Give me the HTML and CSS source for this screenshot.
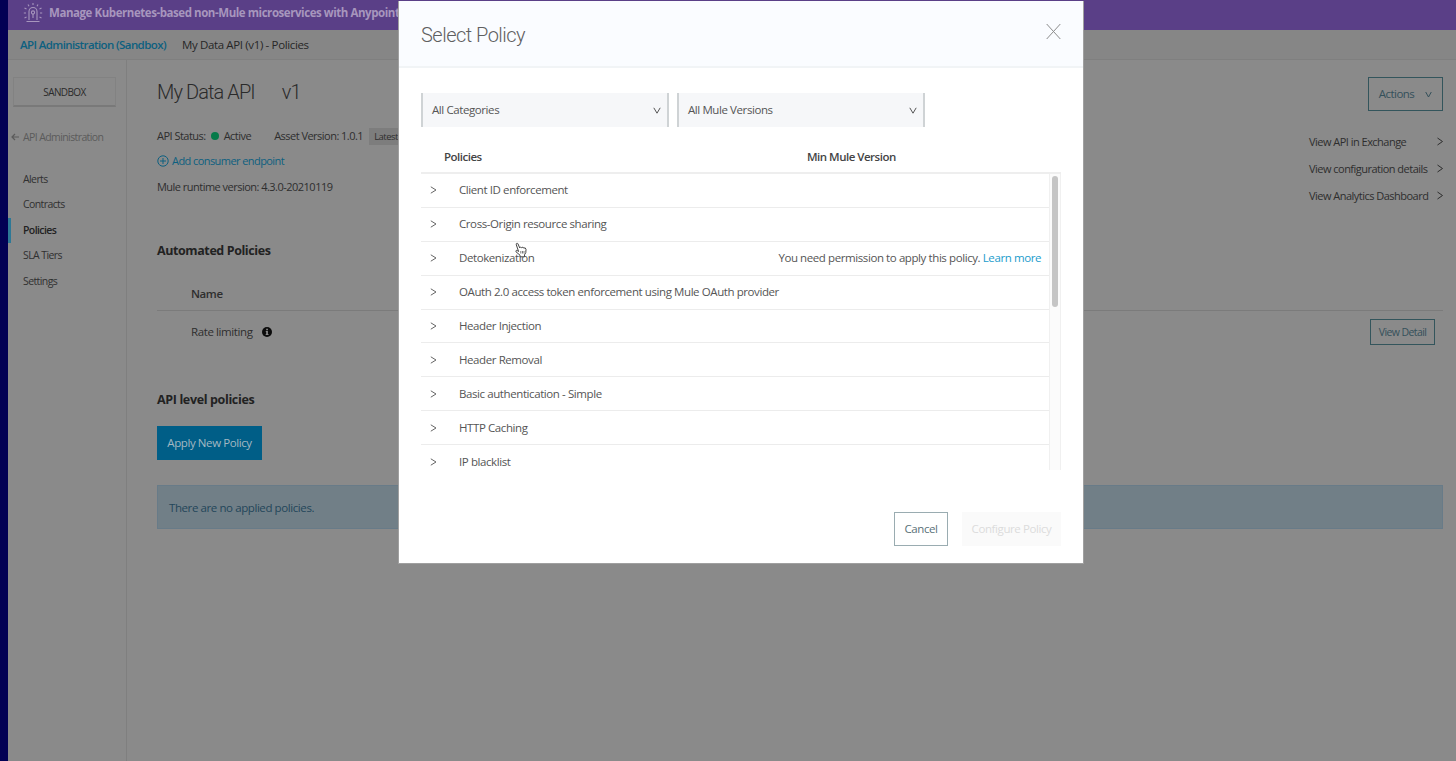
FILE: index.html
```
<!DOCTYPE html>
<html lang="en">
<head>
  <meta charset="UTF-8" />
  <meta name="viewport" content="width=device-width, initial-scale=1.0" />
  <title>API Manager</title>
  <link rel="stylesheet" href="styles.css">
</head>
<body>
  <div class="app">
    <header class="banner">
      <svg class="banner-icon" width="20" height="22" viewBox="0 0 20 22" fill="none" stroke="currentColor" stroke-width="1.1">
        <path d="M6 18V9.5a4 4 0 0 1 8 0V18M3.5 19.5h13M10 12v4"/>
        <circle cx="10" cy="10.5" r="1.6"/>
        <path d="M10 1v2M5 2.5l1 1.7M15 2.5l-1 1.7M1.5 6l2 1M18.5 6l-2 1M.8 11h2.2M17 11h2.2M1.5 16l2-1M18.5 16l-2-1"/>
      </svg>
      <span>Manage Kubernetes-based non-Mule microservices with Anypoint</span>
    </header>
    <nav class="breadcrumb">
      <a class="crumb-link">API Administration (Sandbox)</a>
      <span class="crumb-current">My Data API (v1) - Policies</span>
    </nav>
    <div class="content">
      <aside class="sidebar">
        <button class="env">SANDBOX</button>
        <a class="back">
          <svg width="8" height="8" viewBox="0 0 8 8" fill="none" stroke="currentColor" stroke-width="1.2"><path d="M8 4H1M4 1L1 4l3 3"/></svg>
          <span>API Administration</span>
        </a>
        <ul class="menu">
          <li>Alerts</li>
          <li>Contracts</li>
          <li class="active">Policies</li>
          <li>SLA Tiers</li>
          <li>Settings</li>
        </ul>
      </aside>
      <main class="main">
        <div class="top">
          <div class="info">
            <h1><span>My Data API</span><span>v1</span></h1>
            <div class="status">
              <span>API Status:</span>
              <i class="dot"></i>
              <span>Active</span>
              <span class="asset">Asset Version: 1.0.1</span>
              <span class="badge">Latest</span>
            </div>
            <a class="endpoint">
              <svg width="12" height="12" viewBox="0 0 12 12" fill="none" stroke="currentColor"><circle cx="6" cy="6" r="5.2"/><path d="M6 3v6M3 6h6"/></svg>
              <span>Add consumer endpoint</span>
            </a>
            <p class="runtime">Mule runtime version: 4.3.0-20210119</p>
          </div>
          <div class="side-actions">
            <button class="actions">
              <span>Actions</span>
              <svg width="7" height="7" viewBox="0 0 7 7" fill="none" stroke="currentColor"><path d="M.7 1l2.8 5 2.8-5"/></svg>
            </button>
            <ul class="views">
              <li><span>View API in Exchange</span><svg width="6" height="9" viewBox="0 0 6 9" fill="none" stroke="currentColor"><path d="M.5 1l5 3.5-5 3.5"/></svg></li>
              <li><span>View configuration details</span><svg width="6" height="9" viewBox="0 0 6 9" fill="none" stroke="currentColor"><path d="M.5 1l5 3.5-5 3.5"/></svg></li>
              <li><span>View Analytics Dashboard</span><svg width="6" height="9" viewBox="0 0 6 9" fill="none" stroke="currentColor"><path d="M.5 1l5 3.5-5 3.5"/></svg></li>
            </ul>
          </div>
        </div>
        <h2>Automated Policies</h2>
        <div class="table-head">Name</div>
        <div class="table-row">
          <span>Rate limiting</span>
          <svg class="info-icon" width="10" height="10" viewBox="0 0 10 10"><circle cx="5" cy="5" r="5" fill="#0c0c0c"/><path d="M4.2 1.7h1.7v1.5H4.2zM3.8 4.1h2.1v3h.6v1H3.7v-1h.5V5.1h-.4z" fill="#8a8a8a"/></svg>
          <button class="detail">View Detail</button>
        </div>
        <h2 class="level">API level policies</h2>
        <button class="apply">Apply New Policy</button>
        <div class="notice">There are no applied policies.</div>
      </main>
    </div>
  </div>

  <div class="modal">
    <div class="modal-header">
      <h3>Select Policy</h3>
      <svg class="close" width="15" height="17" viewBox="0 0 15 17" fill="none" stroke="currentColor"><path d="M.7 1l13.6 15M14.3 1L.7 16"/></svg>
    </div>
    <div class="filters">
      <div class="select"><span>All Categories</span><svg width="8" height="7" viewBox="0 0 8 7" fill="none" stroke="currentColor"><path d="M.8.8L4 6.2 7.2.8"/></svg></div>
      <div class="select"><span>All Mule Versions</span><svg width="8" height="7" viewBox="0 0 8 7" fill="none" stroke="currentColor"><path d="M.8.8L4 6.2 7.2.8"/></svg></div>
    </div>
    <div class="list-head"><span class="col-policy">Policies</span><span>Min Mule Version</span></div>
    <div class="list">
      <ul class="rows">
        <li><svg class="arrow" width="7" height="8" viewBox="0 0 7 8" fill="none" stroke="currentColor"><path d="M.8.8L6 4 .8 7.2"/></svg><span>Client ID enforcement</span></li>
        <li><svg class="arrow" width="7" height="8" viewBox="0 0 7 8" fill="none" stroke="currentColor"><path d="M.8.8L6 4 .8 7.2"/></svg><span>Cross-Origin resource sharing</span></li>
        <li><svg class="arrow" width="7" height="8" viewBox="0 0 7 8" fill="none" stroke="currentColor"><path d="M.8.8L6 4 .8 7.2"/></svg><span>Detokenization</span><span class="permission">You need permission to apply this policy. <a>Learn more</a></span></li>
        <li><svg class="arrow" width="7" height="8" viewBox="0 0 7 8" fill="none" stroke="currentColor"><path d="M.8.8L6 4 .8 7.2"/></svg><span>OAuth 2.0 access token enforcement using Mule OAuth provider</span></li>
        <li><svg class="arrow" width="7" height="8" viewBox="0 0 7 8" fill="none" stroke="currentColor"><path d="M.8.8L6 4 .8 7.2"/></svg><span>Header Injection</span></li>
        <li><svg class="arrow" width="7" height="8" viewBox="0 0 7 8" fill="none" stroke="currentColor"><path d="M.8.8L6 4 .8 7.2"/></svg><span>Header Removal</span></li>
        <li><svg class="arrow" width="7" height="8" viewBox="0 0 7 8" fill="none" stroke="currentColor"><path d="M.8.8L6 4 .8 7.2"/></svg><span>Basic authentication - Simple</span></li>
        <li><svg class="arrow" width="7" height="8" viewBox="0 0 7 8" fill="none" stroke="currentColor"><path d="M.8.8L6 4 .8 7.2"/></svg><span>HTTP Caching</span></li>
        <li><svg class="arrow" width="7" height="8" viewBox="0 0 7 8" fill="none" stroke="currentColor"><path d="M.8.8L6 4 .8 7.2"/></svg><span>IP blacklist</span></li>
      </ul>
      <div class="scrollbar"><div class="thumb"></div></div>
    </div>
    <div class="modal-footer">
      <button class="cancel">Cancel</button>
      <button class="configure" disabled>Configure Policy</button>
    </div>
  </div>

  <svg class="cursor" width="12" height="16" viewBox="0 0 12 16" fill="#fff" stroke="#444" stroke-linejoin="round">
    <path d="M3.6 9.5L1.3 2.8C.8 1.2 2.4.6 3 1.9l1.7 4 .8-.9 1.2.7 1.2-.5 1 .9 1.3-.2.8 1.4-.2 3.3-1.3 2.2v2H5v-1.6L1 9.8C.3 8.8 1.4 8 2.3 8.6z"/>
    <path d="M5.8 9v2.5M7.5 9v2.5M9 9v2.5" stroke-width=".7"/>
  </svg>
</body>
</html>
```
FILE: styles.css
```
* {
  box-sizing: border-box;
}
body {
  margin: 0;
  height: 761px;
  overflow: hidden;
  background: #020054;
  font-family: "Open Sans", sans-serif;
  font-size: 11.5px;
  letter-spacing: -0.41px;
  line-height: 16px;
  color: #2e2e2e;
}
h1, h2, h3, p, ul {
  margin: 0;
  padding: 0;
  font-weight: normal;
}
ul {
  list-style: none;
}
button {
  font: inherit;
  letter-spacing: inherit;
  padding: 0;
  background: none;
  border-radius: 0;
}
span {
  white-space: nowrap;
}
svg {
  flex-shrink: 0;
}
.app {
  margin-left: 8px;
  height: 761px;
  background: #8a8a8a;
  display: flex;
  flex-direction: column;
}
.banner {
  height: 30px;
  background: #5a3f87;
  color: #a796bd;
  font-weight: bold;
  letter-spacing: -0.44px;
  display: flex;
  align-items: center;
  padding: 0 0 5px 15px;
  gap: 6px;
}
.breadcrumb {
  height: 30px;
  background: #868686;
  border-bottom: 1px solid #7f7f7f;
  display: flex;
  align-items: center;
  padding-left: 12px;
  gap: 16px;
}
.crumb-link {
  color: #0d6080;
  font-weight: 600;
  letter-spacing: -0.6px;
}
.crumb-current {
  color: #262626;
  letter-spacing: -0.36px;
}
.content {
  flex: 1;
  display: flex;
}
.sidebar {
  width: 119px;
  border-right: 1px solid #7f7f7f;
  padding-top: 17px;
}
.env {
  display: block;
  width: 103px;
  height: 30px;
  margin-left: 5px;
  border: 1px solid #828282;
  border-bottom: 2px solid #797979;
  font-size: 10px;
  letter-spacing: -0.6px;
  color: #2b2b2b;
}
.back {
  display: flex;
  align-items: center;
  gap: 4px;
  margin: 22px 0 0 3px;
  color: #5b5b5b;
  font-size: 10.5px;
  letter-spacing: -0.6px;
}
.menu {
  margin-top: 22px;
  font-size: 10.5px;
  letter-spacing: -0.6px;
}
.menu li {
  height: 25.4px;
  line-height: 25px;
  padding-left: 15px;
  color: #303030;
}
.menu .active {
  border-left: 3px solid #2d7896;
  padding-left: 12px;
  line-height: 24px;
  font-weight: 600;
  color: #222;
}
.main {
  flex: 1;
  padding: 17px 13px 0 30px;
}
.top {
  display: flex;
  justify-content: space-between;
  height: 164px;
  font-size: 11px;
  letter-spacing: -0.52px;
}
h1 {
  font-family: Roboto, sans-serif;
  font-weight: 300;
  font-size: 20px;
  letter-spacing: -0.9px;
  line-height: 31px;
  color: #2a2a2a;
  display: flex;
  gap: 27px;
}
.status {
  display: flex;
  align-items: center;
  margin-top: 19px;
  height: 18px;
}
.dot {
  width: 8px;
  height: 8px;
  border-radius: 50%;
  background: #067a49;
  margin: 0 5px;
}
.asset {
  margin-left: 23px;
}
.badge {
  margin-left: 6px;
  padding: 0 5px;
  background: #7d7d7d;
  font-size: 9.5px;
  line-height: 17px;
}
.endpoint {
  display: flex;
  align-items: center;
  gap: 3px;
  margin-top: 8px;
  color: #0d6080;
  font-weight: 500;
  letter-spacing: -0.57px;
}
.runtime {
  margin-top: 10px;
  white-space: nowrap;
}
.actions {
  width: 75px;
  height: 34px;
  border: 1px solid #33555c;
  color: #34505a;
  font-size: 11.5px;
  display: flex;
  align-items: center;
  justify-content: center;
  gap: 11px;
  margin-left: auto;
}
.views {
  margin-top: 17px;
  width: 134px;
}
.views li {
  display: flex;
  align-items: center;
  justify-content: space-between;
  height: 27px;
}
h2 {
  font-size: 12.5px;
  font-weight: bold;
  line-height: 20px;
  color: #222;
}
.table-head {
  margin-top: 23px;
  height: 27px;
  padding-left: 34px;
  font-weight: 600;
  line-height: 20px;
  border-bottom: 1px solid #7b7b7b;
}
.table-row {
  display: flex;
  align-items: center;
  height: 42px;
  padding: 0 8px 0 34px;
  letter-spacing: -0.4px;
}
.info-icon {
  margin-left: 9px;
}
.detail {
  margin-left: auto;
  width: 65px;
  height: 26px;
  border: 1px solid #33555c;
  color: #34505a;
  font-size: 10.5px;
  letter-spacing: -0.6px;
}
.level {
  margin-top: 37px;
  letter-spacing: -0.36px;
}
.apply {
  display: block;
  width: 105px;
  height: 34px;
  margin-top: 16px;
  border: 0;
  background: #005e87;
  color: #a3b8c2;
}
.notice {
  height: 44px;
  margin-top: 25px;
  padding-left: 11px;
  line-height: 43px;
  background: #717f87;
  border: 1px solid #687b88;
  color: #23465a;
}
.modal {
  position: absolute;
  left: 398px;
  top: 1px;
  width: 686px;
  height: 563px;
  background: #fff;
  border: 1px solid #a0a0a0;
  border-top: 0;
  color: #555;
}
.modal-header {
  height: 67px;
  padding: 0 22px;
  display: flex;
  justify-content: space-between;
  background: #fafcff;
  border-bottom: 2px solid #f1f4f6;
}
h3 {
  font-family: Roboto, sans-serif;
  font-weight: 300;
  font-size: 20px;
  letter-spacing: -0.52px;
  line-height: 68px;
  color: #5f5f5f;
}
.close {
  margin-top: 22px;
  color: #8b8b8b;
}
.filters {
  display: flex;
  gap: 8px;
  padding: 25px 22px 0;
}
.select {
  display: flex;
  align-items: center;
  justify-content: space-between;
  width: 248px;
  height: 34px;
  padding: 0 6px 0 9px;
  background: #f6f7f9;
  border: solid #cfd3d5;
  border-width: 0 2px;
}
.list-head {
  display: flex;
  align-items: center;
  height: 47px;
  margin: 0 22px;
  padding-top: 14px;
  padding-left: 23px;
  border-bottom: 2px solid #eee;
  color: #444;
  font-weight: 600;
  letter-spacing: -0.5px;
}
.col-policy {
  width: 363px;
}
.list {
  display: flex;
  height: 296px;
  margin: 0 22px;
  overflow: hidden;
}
.rows {
  flex: 1;
}
.rows li {
  display: flex;
  align-items: center;
  height: 33.9px;
  padding: 0 8px 0 9px;
  border-bottom: 1px solid #ececec;
}
.rows li:last-child {
  border-bottom: 0;
}
.arrow {
  color: #666;
  margin-right: 22px;
}
.permission {
  margin-left: auto;
}
.permission a {
  color: #1b9ccc;
}
.scrollbar {
  width: 12px;
  background: #fbfbfb;
  border: solid #f0f0f0;
  border-width: 0 1px;
  padding: 2px 2px;
}
.thumb {
  width: 6px;
  height: 131px;
  border-radius: 3px;
  background: #c5c5c5;
}
.modal-footer {
  display: flex;
  justify-content: flex-end;
  gap: 14px;
  margin: 42px 22px 0;
}
.cancel, .configure {
  height: 34px;
  width: 54px;
  border: 1px solid #9aacb1;
  color: #5a7178;
}
.configure {
  width: 99px;
  border: 0;
  background: #fafafa;
  color: #dcdcdc;
}
.cursor {
  position: absolute;
  left: 515px;
  top: 242px;
}
```
